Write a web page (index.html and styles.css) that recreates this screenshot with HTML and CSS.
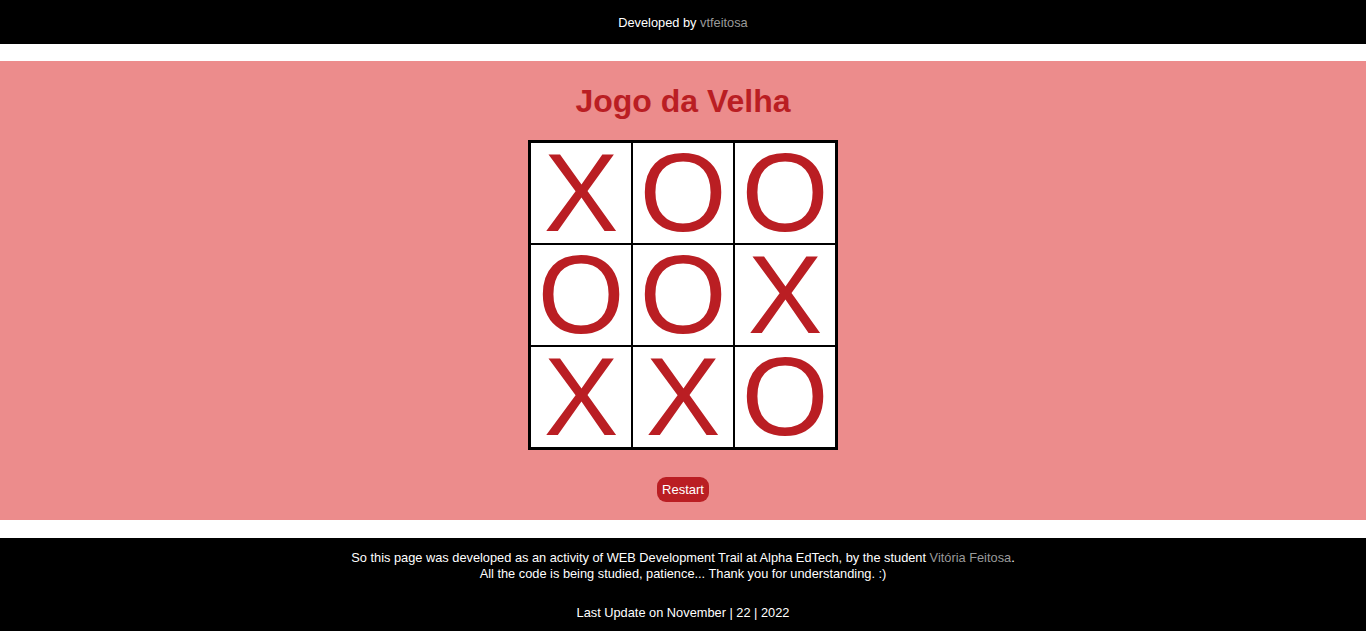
FILE: index.html
```html
<!DOCTYPE html>
<html lang="pt-BR">
<head>
<meta charset="utf-8">
<title>Jogo da Velha</title>
<link rel="stylesheet" href="styles.css">
</head>
<body>
<header class="top">
  <p><span class="dev">Developed by</span> <a class="muted" href="#">vtfeitosa</a></p>
</header>
<main class="game">
  <h1 class="title">Jogo da Velha</h1>
  <div class="board">
    <div class="cell">X</div>
    <div class="cell">O</div>
    <div class="cell">O</div>
    <div class="cell">O</div>
    <div class="cell">O</div>
    <div class="cell">X</div>
    <div class="cell">X</div>
    <div class="cell">X</div>
    <div class="cell">O</div>
  </div>
  <button class="restart">Restart</button>
</main>
<footer class="bottom">
  <p class="about">So this page was developed as an activity of WEB Development Trail at Alpha EdTech, by the student <a class="muted" href="#">Vitória Feitosa</a>.<br>All the code is being studied, patience... Thank you for understanding. :)</p>
  <p class="update">Last Update on November | 22 | 2022</p>
</footer>
</body>
</html>
```

FILE: styles.css
```css
* { box-sizing: border-box; }
html, body {
  margin: 0;
  padding: 0;
  background: #ffffff;
  font-family: "Liberation Sans", Arial, sans-serif;
}
.top {
  background: #000;
  color: #fff;
  height: 44px;
  display: flex;
  align-items: center;
  justify-content: center;
  font-size: 12.8px;
}
.top p { margin: 0; }
.dev { font-weight: 500; }
.muted { color: #9a9a9a; text-decoration: none; }
.game {
  margin-top: 17px;
  background: #ec8c8c;
  padding: 22px 0 18px;
  display: flex;
  flex-direction: column;
  align-items: center;
}
.title {
  margin: 0 0 20px;
  font-size: 32px;
  line-height: 37px;
  color: #ba1e23;
  font-weight: bold;
}
.board {
  display: grid;
  grid-template-columns: repeat(3, 100px);
  grid-template-rows: repeat(3, 100px);
  gap: 2px;
  padding: 3px;
  background: #000;
}
.cell {
  background: #fff;
  color: #ba1e23;
  font-size: 112px;
  line-height: 100px;
  display: flex;
  align-items: center;
  justify-content: center;
  font-family: "Liberation Sans", Arial, sans-serif;
}
.restart {
  margin-top: 27px;
  background: #ba1e23;
  color: #fff;
  border: none;
  border-radius: 9px;
  font-family: "Liberation Sans", Arial, sans-serif;
  font-size: 13px;
  line-height: 15px;
  padding: 5px 5px;
  cursor: pointer;
}
.bottom {
  margin-top: 18px;
  background: #000;
  color: #fff;
  font-size: 12.8px;
  line-height: 16px;
  text-align: center;
  padding: 12px 0 10px;
}
.about { margin: 0; }
.update { margin: 23px 0 0; }
```
